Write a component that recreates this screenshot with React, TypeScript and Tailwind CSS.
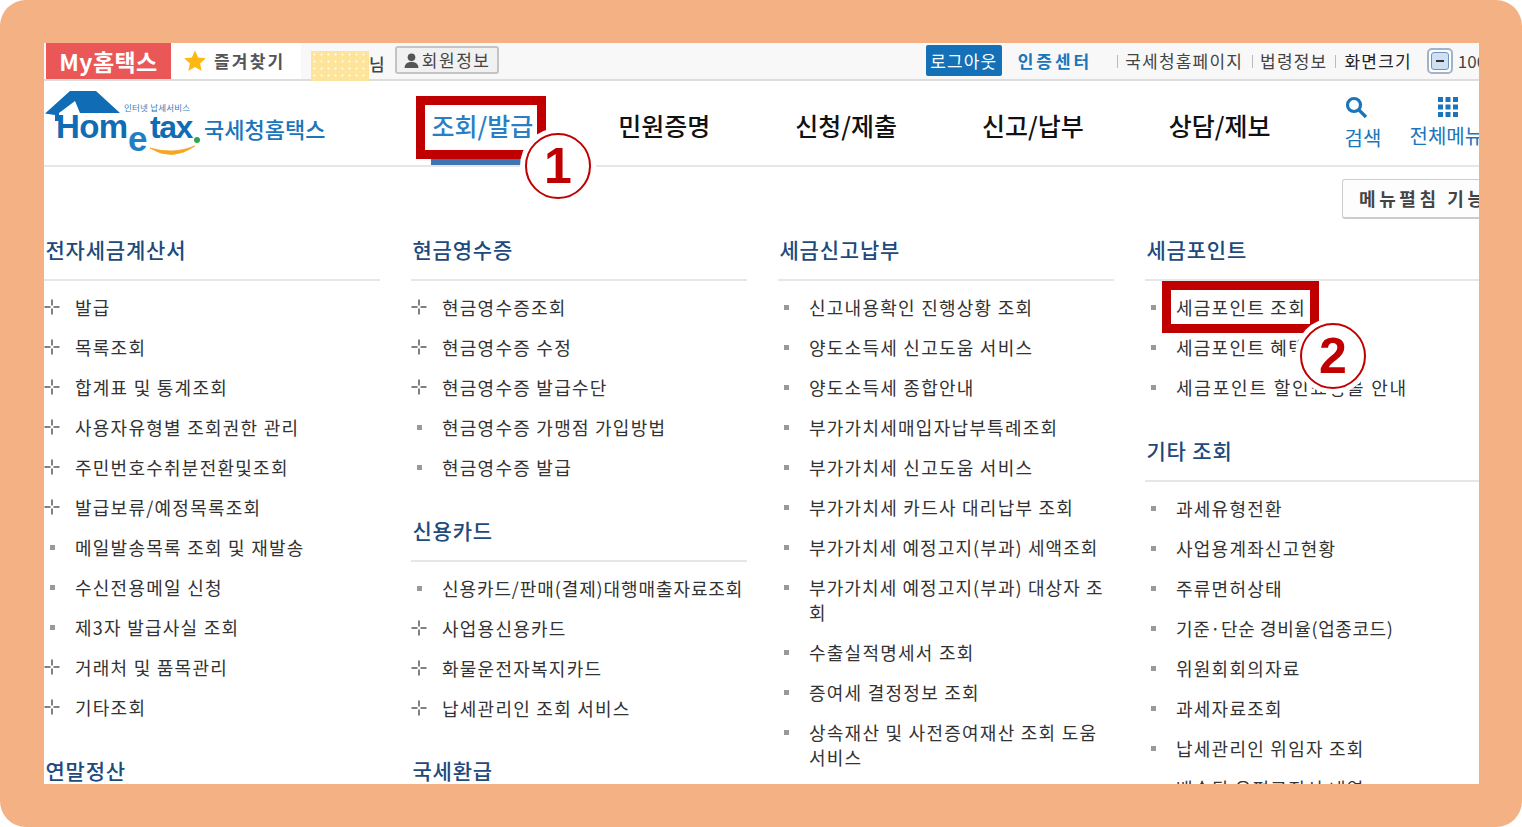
import React from "react";

type Item = { t: string; plus?: boolean; cls?: string };
type Section = { title: string; items: Item[]; mb?: string };

const P = (t: string): Item => ({ t, plus: true });
const D = (t: string, cls?: string): Item => ({ t, cls });

const columns: Section[][] = [
  [
    {
      title: "전자세금계산서",
      items: [
        P("발급"), P("목록조회"), P("합계표 및 통계조회"), P("사용자유형별 조회권한 관리"),
        P("주민번호수취분전환및조회"), P("발급보류/예정목록조회"), D("메일발송목록 조회 및 재발송"),
        D("수신전용메일 신청"), D("제3자 발급사실 조회"), P("거래처 및 품목관리"), P("기타조회"),
      ],
    },
    { title: "연말정산", items: [] },
  ],
  [
    {
      title: "현금영수증",
      items: [P("현금영수증조회"), P("현금영수증 수정"), P("현금영수증 발급수단"), D("현금영수증 가맹점 가입방법"), D("현금영수증 발급")],
    },
    {
      title: "신용카드",
      items: [D("신용카드/판매(결제)대행매출자료조회", "whitespace-nowrap tracking-[0.9px]"), P("사업용신용카드"), P("화물운전자복지카드"), P("납세관리인 조회 서비스")],
      mb: "mb-[13px]",
    },
    { title: "국세환급", items: [] },
  ],
  [
    {
      title: "세금신고납부",
      items: [
        D("신고내용확인 진행상황 조회"), D("양도소득세 신고도움 서비스"), D("양도소득세 종합안내"),
        D("부가가치세매입자납부특례조회"), D("부가가치세 신고도움 서비스"), D("부가가치세 카드사 대리납부 조회"),
        D("부가가치세 예정고지(부과) 세액조회", "tracking-[1.1px]"), D("부가가치세 예정고지(부과) 대상자 조회", "tracking-[1.1px]"), D("수출실적명세서 조회"),
        D("증여세 결정정보 조회"), D("상속재산 및 사전증여재산 조회 도움 서비스"),
      ],
    },
  ],
  [
    { title: "세금포인트", items: [D("세금포인트 조회"), D("세금포인트 혜택"), D("세금포인트 할인쇼핑몰 안내", "tracking-[1.8px]")] },
    {
      title: "기타 조회",
      items: [
        D("과세유형전환"), D("사업용계좌신고현황"), D("주류면허상태"), D("기준·단순 경비율(업종코드)", "tracking-[0.6px]"),
        D("위원회회의자료"), D("과세자료조회"), D("납세관리인 위임자 조회"), D("배송된 우편고지서 내역"),
      ],
    },
  ],
];

function PlusBullet() {
  return (
    <svg width="16" height="16" viewBox="0 0 16 16" className="shrink-0" fill="none" stroke="#808080" strokeWidth="2">
      <path d="M8 0.500v6M8 9.500v6M0.500 8h6M9.500 8h6" />
    </svg>
  );
}

function Row({ item }: { item: Item }) {
  return (
    <li className="flex py-[7.5px] leading-[25px] text-[18px] tracking-[1.25px] text-[#333]">
      <span className="w-[31px] shrink-0 h-[25px] flex items-center">
        {item.plus ? <PlusBullet /> : <span className="block w-[5px] h-[5px] bg-[#999] ml-[6px]" />}
      </span>
      <span className={item.cls}>{item.t}</span>
    </li>
  );
}

function Logo() {
  return (
    <svg width="160" height="72" viewBox="44 88 160 72" className="shrink-0">
      <path d="M70 91H96L120 113H80L75 101L59 113V121H55V115L45 113.500z" fill="#0f6cb5" />
      <text x="56" y="138" fontFamily="'Liberation Sans',sans-serif" fontWeight="700" fontSize="33" letterSpacing="-0.6" fill="#0f6cb5">Hom</text>
      <text x="128" y="151" fontFamily="'Liberation Sans',sans-serif" fontWeight="700" fontSize="35" fill="#1f7fc4">e</text>
      <text x="150" y="138" fontFamily="'Liberation Sans',sans-serif" fontWeight="700" fontSize="32" letterSpacing="-1.500" fill="#0f6cb5">tax</text>
      <circle cx="197" cy="140" r="3" fill="#2aa84a" />
      <path d="M150 148q22 14 45-2q-22 9-45 2z" fill="#f5a623" stroke="#f5a623" strokeWidth="0.800" />
      <text x="124" y="111" fontFamily="'Noto Sans CJK KR',sans-serif" fontSize="8.500" letterSpacing="0.200" fill="#2f7fc0">인터넷 납세서비스</text>
    </svg>
  );
}

function Annotation({ n, className }: { n: string; className: string }) {
  return (
    <div className={`absolute w-[66px] h-[66px] rounded-full bg-white border-[2.5px] border-[#c00000] flex items-center justify-center text-[#c00000] text-[50px] font-bold leading-none font-['Liberation_Sans',sans-serif] shadow-[0_0_0_5px_#fff] ${className}`}>
      {n}
    </div>
  );
}

export default function App() {
  return (
    <div className="w-[1522px] h-[827px] bg-white font-['Noto_Sans_CJK_KR','Noto_Sans',sans-serif]">
      <div className="relative w-full h-full rounded-[26px] bg-[#f4b183] pt-[43px] pl-[44px] overflow-hidden">
        <div className="w-[1435px] h-[741px] bg-white overflow-hidden">
          <div className="w-[1500px]">
            {/* top bar */}
            <div className="relative h-[38px] flex items-stretch bg-[#f8f8f8] border-b-2 border-[#dddddd]">
              <div className="ml-[2px] w-[125px] flex items-center justify-center bg-[#e95757] text-white text-[23px] font-bold tracking-[0.4px]">My홈택스</div>
              <div className="w-[130px] flex items-center bg-white pl-[12px] gap-[7px] text-[17px] font-bold tracking-[2.2px] text-[#555]">
                <svg width="24" height="24" viewBox="0 0 24 24" fill="#fdb813"><path d="M12 1.500l3.200 7 7.600.8-5.700 5.100 1.600 7.500L12 18.100l-6.700 3.800 1.600-7.500L1.200 9.300l7.600-.8z" /></svg>
                즐겨찾기
              </div>
              <div className="ml-[10px] w-[58px] h-[30px] mt-[8px] bg-[#fde49a] bg-[radial-gradient(#fff6d8_1px,transparent_1.2px)] bg-[length:7px_7px]" />
              <span className="self-center mt-[6px] text-[17px] font-medium text-[#444]">님</span>
              <div className="ml-[10px] mt-[3px] w-[104px] h-[28px] flex items-center justify-center gap-[2px] rounded-[3px] border-2 border-[#c4c4c4] bg-[#f1f1f1] text-[17px] tracking-[1.500px] text-[#444]">
                <svg width="17" height="17" viewBox="0 0 16 16" fill="#555"><circle cx="8" cy="5" r="3.600" /><path d="M1.500 15c0-4 3-5.500 6.500-5.500s6.500 1.500 6.500 5.500z" /></svg>
                회원정보
              </div>
              <div className="ml-[427px] mt-[2px] w-[76px] h-[31px] flex items-center justify-center rounded-[2px] bg-[#1471b8] text-white text-[17px] tracking-[1.100px]">로그아웃</div>
              <span className="ml-[16px] self-center text-[17px] font-bold tracking-[3px] text-[#1a75bb]">인증센터</span>
              <span className="ml-[25px] self-center w-px h-[13px] bg-[#bbb]" />
              <span className="ml-[7px] self-center text-[17px] tracking-[1.200px] text-[#444]">국세청홈페이지</span>
              <span className="ml-[9px] self-center w-px h-[13px] bg-[#bbb]" />
              <span className="ml-[7px] self-center text-[17px] tracking-[1.200px] text-[#444]">법령정보</span>
              <span className="ml-[8px] self-center w-px h-[13px] bg-[#bbb]" />
              <span className="ml-[8px] self-center text-[17px] tracking-[1.200px] text-[#222]">화면크기</span>
              <div className="ml-[15px] self-center w-[26px] h-[26px] rounded-[5px] border-2 border-[#9fb4c9] flex items-center justify-center bg-white">
                <span className="w-[18px] h-[18px] rounded-[3px] border border-[#6d93bd] bg-[#cfe0f2] flex items-center justify-center">
                  <span className="w-[8px] h-[2px] bg-[#333]" />
                </span>
              </div>
              <span className="ml-[5px] self-center text-[17px] text-[#444]">100%</span>
            </div>

            {/* main nav */}
            <div className="h-[86px] flex items-stretch border-b-2 border-[#e6e6e6]">
              <div className="w-[161px] flex items-start pt-[7px]">
                <Logo />
              </div>
              <span className="self-center mt-[10px] -ml-[1px] text-[22px] font-medium text-[#1a75bb]">국세청홈택스</span>
              <div className="ml-[106px] flex items-stretch text-[25px] font-medium text-[#111] gap-[85px]">
                <span className="relative flex items-center pt-[6px] text-[#2a7fc4]">
                  조회/발급
                  <span className="absolute left-0 right-0 bottom-0 h-[7px] bg-[#3d75b5]" />
                </span>
                <span className="flex items-center pt-[6px]">민원증명</span>
                <span className="flex items-center pt-[6px]">신청/제출</span>
                <span className="flex items-center pt-[6px]">신고/납부</span>
                <span className="flex items-center pt-[6px]">상담/제보</span>
              </div>
              <div className="ml-[74px] flex flex-col items-start text-[20px] text-[#1a75bb] pt-[14px] leading-[30px] w-[38px]">
                <svg width="24" height="24" viewBox="0 0 24 24" fill="none" stroke="#1a75bb" strokeWidth="3.200" className="-ml-[1px]"><circle cx="10" cy="10" r="6.500" /><path d="M15 15l7 7" /></svg>
                <span className="mt-[4px] whitespace-nowrap">검색</span>
              </div>
              <div className="ml-[27px] flex flex-col items-start text-[20px] text-[#1a75bb] pt-[15px] leading-[30px]">
                <svg width="22" height="22" viewBox="0 0 22 22" fill="#1a75bb" className="ml-[27px]">
                  <path d="M1 1h5v5H1zM8.500 1h5v5h-5zM16 1h5v5h-5zM1 8.500h5v5H1zM8.500 8.500h5v5h-5zM16 8.500h5v5h-5zM1 16h5v5H1zM8.500 16h5v5h-5zM16 16h5v5h-5z" />
                </svg>
                <span className="mt-[3px] whitespace-nowrap">전체메뉴</span>
              </div>
            </div>

            {/* expand button */}
            <div className="h-[53px] flex justify-end items-start pt-[12px]">
              <div className="w-[202px] h-[40px] pl-[16px] flex items-center rounded-[3px] border-2 border-t border-l border-[#cccccc] bg-[#fdfdfd] text-[18px] font-bold tracking-[3.600px] text-[#444]">메뉴펼침 기능</div>
            </div>

            {/* columns */}
            <div className="grid grid-cols-[336px_336px_336px_1fr] gap-x-[31px]">
              {columns.map((col, i) => (
                <div key={i}>
                  {col.map((s) => (
                    <section key={s.title} className={s.mb ?? "mb-[14px]"}>
                      <h3 className="h-[61px] pl-[1.5px] flex items-center border-b-2 border-[#e6e6e6] text-[21px] font-medium tracking-[0.800px] text-[#1e4a7c]">{s.title}</h3>
                      <ul className="pt-[6px]">
                        {s.items.map((it) => (
                          <Row key={it.t} item={it} />
                        ))}
                      </ul>
                    </section>
                  ))}
                </div>
              ))}
            </div>
          </div>
        </div>

        {/* annotations */}
        <div className="absolute left-[416px] top-[96px] w-[130px] h-[63px] border-[9px] border-[#c00000]" />
        <div className="absolute left-[1162px] top-[281px] w-[157px] h-[52px] border-[9px] border-[#c00000]" />
        <Annotation n="1" className="left-[525px] top-[133px]" />
        <Annotation n="2" className="left-[1300px] top-[323px]" />
      </div>
    </div>
  );
}
